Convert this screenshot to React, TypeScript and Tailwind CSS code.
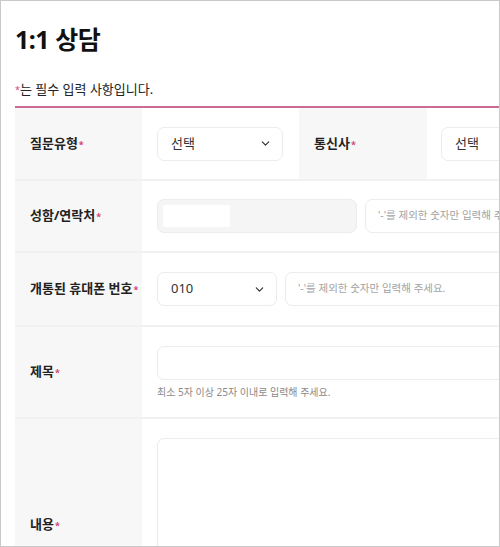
const FONT = { fontFamily: '"Noto Sans", "Noto Sans CJK KR", sans-serif' };

function Chevron() {
  return (
    <svg width="11" height="11" viewBox="0 0 24 24" fill="none" aria-hidden="true">
      <path d="m5 8.5 7 7 7-7" stroke="#333" strokeWidth="2.6" strokeLinecap="round" strokeLinejoin="round" />
    </svg>
  );
}

function Req() {
  return <span className="ml-[1px] translate-y-[1px] text-[9px] text-[#d1437c]">*</span>;
}

function Label({ children }: { children: React.ReactNode }) {
  return (
    <div className="flex w-[127px] shrink-0 items-center bg-[#f7f7f7] pl-[15px] text-[13px] font-bold text-[#222]">
      {children}
      <Req />
    </div>
  );
}

function Select({ value, width }: { value: string; width: string }) {
  return (
    <div className={`flex h-[34px] items-center justify-between rounded-[7px] border border-[#ececec] bg-white pl-[13px] pr-[11px] text-[13px] text-[#333] ${width}`}>
      <span>{value}</span>
      <Chevron />
    </div>
  );
}

function TextInput({ placeholder, width }: { placeholder?: string; width: string }) {
  return (
    <div className={`flex h-[34px] items-center rounded-[7px] border border-[#ececec] bg-white pl-[12px] text-[10.5px] text-[#a3a3a3] ${width}`}>
      {placeholder}
    </div>
  );
}

export default function App() {
  return (
    <div className="h-[547px] w-[500px] overflow-hidden border border-[#c9c9c9] bg-white" style={FONT}>
      <div className="ml-[14px] w-[640px]">
        <h1 className="pt-[22px] text-[25px] font-bold leading-[32px] tracking-[-0.02em] text-[#111]">1:1 상담</h1>
        <p className="mt-[24px] flex items-center border-b-2 border-[#c96b93] pb-[7px] text-[13px] leading-[20px] text-[#222]">
          <span className="translate-y-[1px] text-[9px] text-[#d1437c]">*</span>는 필수 입력 사항입니다.
        </p>

        <div className="flex h-[73px] border-b-2 border-[#f1f1f1]">
          <Label>질문유형</Label>
          <div className="flex items-center px-[15px]">
            <Select value="선택" width="w-[126px]" />
          </div>
          <div className="ml-[1px]">
            <div className="flex h-full w-[128px] items-center bg-[#f7f7f7] pl-[15px] text-[13px] font-bold text-[#222]">
              통신사
              <Req />
            </div>
          </div>
          <div className="flex items-center pl-[14px]">
            <Select value="선택" width="w-[126px]" />
          </div>
        </div>

        <div className="flex h-[72px] border-b-2 border-[#f1f1f1]">
          <Label>성함/연락처</Label>
          <div className="flex items-center gap-[8px] px-[15px]">
            <div className="flex h-[34px] w-[200px] items-center rounded-[7px] border border-[#ececec] bg-[#f5f5f5] pl-[5px]">
              <div className="h-[22px] w-[67px] rounded-[2px] bg-white" />
            </div>
            <TextInput placeholder="'-'를 제외한 숫자만 입력해 주세요." width="w-[200px]" />
          </div>
        </div>

        <div className="flex h-[74px] border-b-2 border-[#f1f1f1]">
          <Label>개통된 휴대폰 번호</Label>
          <div className="flex items-center gap-[8px] px-[15px]">
            <Select value="010" width="w-[120px]" />
            <TextInput placeholder="'-'를 제외한 숫자만 입력해 주세요." width="w-[300px]" />
          </div>
        </div>

        <div className="flex h-[92px] border-b-2 border-[#f1f1f1]">
          <Label>제목</Label>
          <div className="flex flex-col justify-center px-[15px] pt-[2px]">
            <TextInput width="w-[440px]" />
            <p className="mt-[4px] text-[10px] leading-[16px] text-[#8a8a8a]">최소 5자 이상 25자 이내로 입력해 주세요.</p>
          </div>
        </div>

        <div className="flex h-[212px]">
          <Label>내용</Label>
          <div className="px-[15px] pt-[19px]">
            <div className="h-[172px] w-[440px] rounded-[7px] border border-[#ececec] bg-white" />
          </div>
        </div>
      </div>
    </div>
  );
}
